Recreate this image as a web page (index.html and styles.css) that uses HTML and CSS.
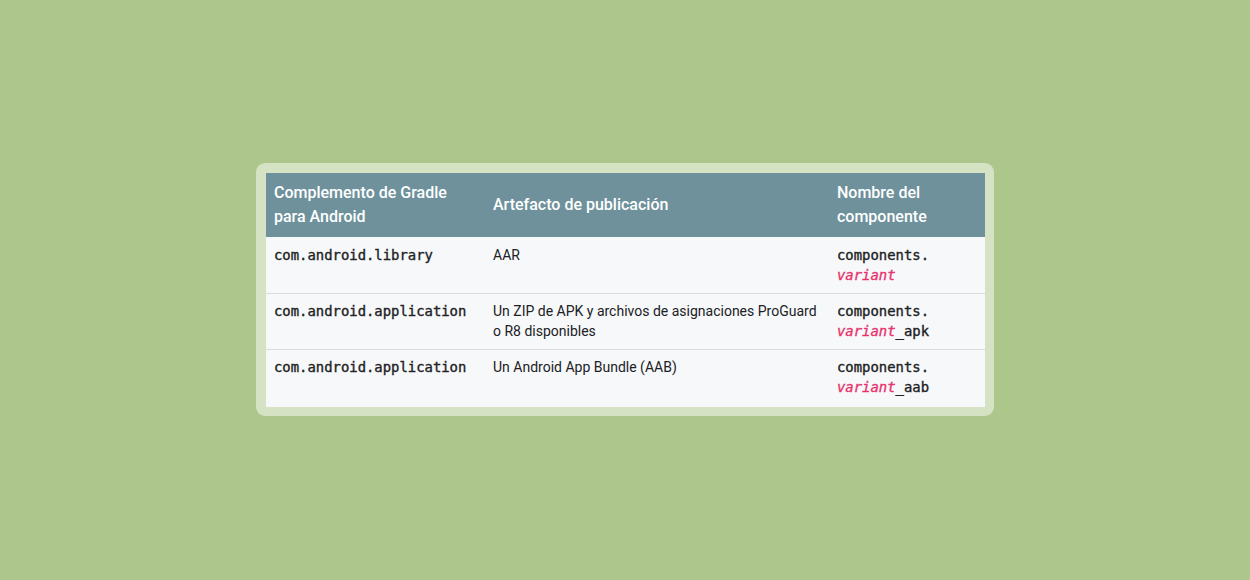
FILE: index.html
```html
<!DOCTYPE html>
<html lang="es">
<head>
<meta charset="utf-8">
<link rel="stylesheet" href="styles.css">
</head>
<body>
<div class="stage">
  <div class="card">
    <table class="tbl">
      <colgroup>
        <col class="c1"><col class="c2"><col class="c3">
      </colgroup>
      <thead>
        <tr>
          <th>Complemento de Gradle para Android</th>
          <th>Artefacto de publicación</th>
          <th>Nombre del componente</th>
        </tr>
      </thead>
      <tbody>
        <tr>
          <td><code>com.android.library</code></td>
          <td>AAR</td>
          <td><code>components.<wbr><var>variant</var></code></td>
        </tr>
        <tr>
          <td><code>com.android.application</code></td>
          <td>Un ZIP de APK y archivos de asignaciones ProGuard o R8 disponibles</td>
          <td><code>components.<wbr><var>variant</var>_apk</code></td>
        </tr>
        <tr>
          <td><code>com.android.application</code></td>
          <td>Un Android App Bundle (AAB)</td>
          <td><code>components.<wbr><var>variant</var>_aab</code></td>
        </tr>
      </tbody>
    </table>
  </div>
</div>
</body>
</html>
```

FILE: styles.css
```css
html, body {
  margin: 0;
  padding: 0;
  background: #adc68b;
}
body {
  font-family: Roboto, "Noto Sans", sans-serif;
}
.stage {
  width: 1250px;
  height: 580px;
  display: flex;
  justify-content: center;
  align-items: flex-start;
  padding-top: 163px;
  box-sizing: border-box;
}
.card {
  background: #d5e2c3;
  border-radius: 9px;
  padding: 10px 9px 9px 10px;
}
.tbl {
  border-collapse: collapse;
  table-layout: fixed;
  width: 719px;
  background: #f7f8fa;
}
.c1 { width: 219px; }
.c2 { width: 344px; }
.c3 { width: 156px; }
th {
  background: #6e919c;
  color: #ffffff;
  font-weight: 500;
  font-size: 16px;
  line-height: 24px;
  text-align: left;
  padding: 8px;
  vertical-align: middle;
}
td {
  font-size: 14px;
  line-height: 20px;
  color: #202124;
  padding: 7px 8px 8px 8px;
  vertical-align: top;
  border-top: 1px solid #dadce0;
}
tbody tr:first-child td {
  border-top: 0;
  padding-top: 8px;
}
tbody tr:last-child td {
  padding-bottom: 10px;
}
code {
  font-family: "DejaVu Sans Mono", "Liberation Mono", monospace;
  font-size: 13.9px;
  line-height: 20px;
  vertical-align: top;
  font-weight: 400;
  -webkit-text-stroke: 0.35px #202124;
  color: #202124;
}
var {
  color: #e8336c;
  -webkit-text-stroke: 0.35px #e8336c;
  font-style: italic;
}
```
